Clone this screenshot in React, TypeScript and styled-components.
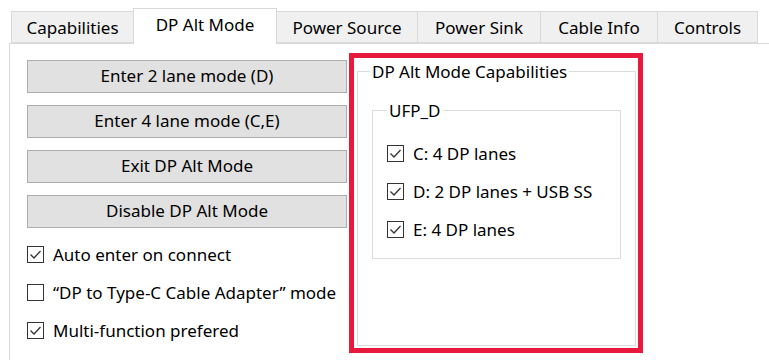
import React from "react";
import styled, { createGlobalStyle } from "styled-components";

const Global = createGlobalStyle`
  html, body { margin: 0; padding: 0; background: #ffffff; }
  body { font-family: "Noto Sans", "Open Sans", sans-serif; font-size: 17px; color: #000; }
  * { box-sizing: border-box; }
`;

const Page = styled.div`
  width: 769px;
  height: 360px;
  overflow: hidden;
  padding-top: 8px;
`;

const TabStrip = styled.div`
  display: flex;
  align-items: flex-end;
  padding-left: 12px;
  height: 35px;
  position: relative;
  z-index: 1;
`;

const Tab = styled.div<{ $active?: boolean; $w: number }>`
  width: ${(p) => p.$w}px;
  height: ${(p) => (p.$active ? 36 : 32)}px;
  margin-bottom: ${(p) => (p.$active ? -1 : 0)}px;
  display: flex;
  align-items: center;
  justify-content: center;
  padding-bottom: ${(p) => (p.$active ? 4 : 0)}px;
  background: ${(p) => (p.$active ? "#ffffff" : "#f0f0f0")};
  border: 1px solid #d9d9d9;
  border-bottom: ${(p) => (p.$active ? "none" : "1px solid #d9d9d9")};
  margin-left: -1px;
  white-space: nowrap;
`;

const Panel = styled.div`
  margin-left: 9px;
  border-left: 1px solid #d9d9d9;
  border-top: 1px solid #d9d9d9;
  display: flex;
  align-items: flex-start;
  padding: 9px 0 0 17px;
  height: 320px;
`;

const LeftCol = styled.div`
  width: 321px;
  display: flex;
  flex-direction: column;
  padding-top: 7px;
`;

const ButtonStack = styled.div`
  display: flex;
  flex-direction: column;
  gap: 12px;
  margin-bottom: 7px;
`;

const Button = styled.div`
  height: 33px;
  width: 320px;
  background: #e1e1e1;
  border: 1px solid #adadad;
  display: flex;
  align-items: center;
  justify-content: center;
  padding-bottom: 2px;
`;

const CheckRow = styled.div`
  height: 38px;
  display: flex;
  align-items: center;
  gap: 9px;
  white-space: nowrap;
`;

const BoxEl = styled.span`
  width: 17px;
  height: 17px;
  border: 1px solid #333333;
  background: #fff;
  display: inline-flex;
  align-items: center;
  justify-content: center;
  flex: none;
`;

const Check = ({ on }: { on: boolean }) => (
  <BoxEl>
    {on && (
      <svg width="13" height="11" viewBox="0 0 13 11">
        <path d="M1.5 5.5 L5 9 L11.5 2" fill="none" stroke="#333" strokeWidth="1.3" />
      </svg>
    )}
  </BoxEl>
);

const Highlight = styled.div`
  width: 294px;
  height: 300px;
  margin-left: 1px;
  border: 5px solid #e8193c;
  padding: 2px 2px 2px 3px;
  display: flex;
`;

const OuterGroup = styled.fieldset`
  margin: 0;
  border: 1px solid #dcdcdc;
  padding: 0 14px 0 12px;
  flex: 1;
  min-width: 0;
`;

const InnerGroup = styled.fieldset`
  margin: 16px 0 0 2px;
  border: 1px solid #dcdcdc;
  padding: 12px 14px 10px 14px;
  min-width: 0;
`;

const Legend = styled.legend`
  padding: 0 2px;
  line-height: 23px;
`;

const tabs: [string, number][] = [
  ["Capabilities", 123],
  ["DP Alt Mode", 144],
  ["Power Source", 142],
  ["Power Sink", 124],
  ["Cable Info", 118],
  ["Controls", 101],
];

export default function App() {
  return (
    <>
      <Global />
      <Page>
        <TabStrip>
          {tabs.map(([t, w]) => (
            <Tab key={t} $w={w} $active={t === "DP Alt Mode"}>
              {t}
            </Tab>
          ))}
        </TabStrip>
        <Panel>
          <LeftCol>
            <ButtonStack>
              <Button>Enter 2 lane mode (D)</Button>
              <Button>Enter 4 lane mode (C,E)</Button>
              <Button>Exit DP Alt Mode</Button>
              <Button>Disable DP Alt Mode</Button>
            </ButtonStack>
            <CheckRow>
              <Check on={true} />
              Auto enter on connect
            </CheckRow>
            <CheckRow>
              <Check on={false} />
              “DP to Type-C Cable Adapter” mode
            </CheckRow>
            <CheckRow>
              <Check on={true} />
              Multi-function prefered
            </CheckRow>
          </LeftCol>
          <Highlight>
            <OuterGroup>
              <Legend>DP Alt Mode Capabilities</Legend>
              <InnerGroup>
                <Legend>UFP_D</Legend>
                <CheckRow>
                  <Check on={true} />
                  C: 4 DP lanes
                </CheckRow>
                <CheckRow>
                  <Check on={true} />
                  D: 2 DP lanes + USB SS
                </CheckRow>
                <CheckRow>
                  <Check on={true} />
                  E: 4 DP lanes
                </CheckRow>
              </InnerGroup>
            </OuterGroup>
          </Highlight>
        </Panel>
      </Page>
    </>
  );
}
